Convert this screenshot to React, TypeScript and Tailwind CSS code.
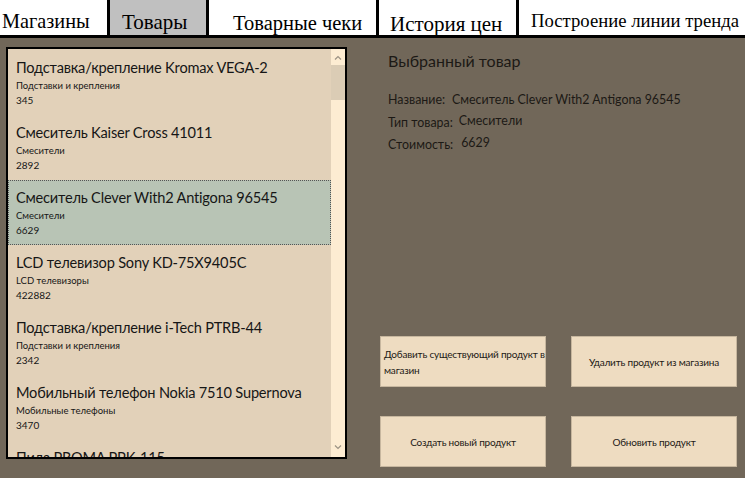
import React from 'react';

type Product = { name: string; type: string; price: string };

const products: Product[] = [
  { name: 'Подставка/крепление Kromax VEGA-2', type: 'Подставки и крепления', price: '345' },
  { name: 'Смеситель Kaiser Cross 41011', type: 'Смесители', price: '2892' },
  { name: 'Смеситель Clever With2 Antigona 96545', type: 'Смесители', price: '6629' },
  { name: 'LCD телевизор Sony KD-75X9405C', type: 'LCD телевизоры', price: '422882' },
  { name: 'Подставка/крепление i-Tech PTRB-44', type: 'Подставки и крепления', price: '2342' },
  { name: 'Мобильный телефон Nokia 7510 Supernova', type: 'Мобильные телефоны', price: '3470' },
  { name: 'Пила PROMA PPK-115', type: 'Пилы', price: '1290' },
];

const selectedIndex = 2;

const tabs = [
  { label: 'Магазины', box: 'w-[110px] pl-[2px] pt-[11px] text-[20.3px]', active: false },
  { label: 'Товары', box: 'w-[99px] pl-[12px] pt-[12px] text-[21px]', active: true },
  { label: 'Товарные чеки', box: 'w-[170px] pl-[24px] pt-[13px] text-[20.5px]', active: false },
  { label: 'История цен', box: 'w-[140px] pl-[11px] pt-[14px] text-[21px]', active: false },
  { label: 'Построение линии тренда', box: 'flex-1 pl-[12px] pt-[12px] text-[18.7px]', active: false },
];

const Chevron: React.FC<{ up?: boolean }> = ({ up }) => (
  <svg width="8" height="5" viewBox="0 0 8 5" className="text-[#9c9384]">
    <path
      d={up ? 'M1 4.5 L4 1.5 L7 4.5' : 'M1 0.5 L4 3.5 L7 0.5'}
      fill="none"
      stroke="currentColor"
      strokeWidth="1.2"
    />
  </svg>
);

const App: React.FC = () => {
  const selected = products[selectedIndex];

  return (
    <div className="w-[745px] h-[478px] overflow-hidden bg-[#716759] flex flex-col font-['Lato',sans-serif]">
      {/* tab strip */}
      <div className="flex h-[38px] bg-white border-b-[3px] border-black font-['Liberation_Serif',serif] text-black">
        {tabs.map((t, i) => (
          <div
            key={t.label}
            className={`${t.box} leading-none whitespace-nowrap ${i < tabs.length - 1 ? 'border-r-[3px] border-black' : ''} ${t.active ? 'bg-[#c0c0c0]' : 'bg-white'}`}
          >
            {t.label}
          </div>
        ))}
      </div>

      <div className="flex flex-1 pt-[9px] pl-[6px]">
        {/* product list */}
        <div className="w-[341px] h-[412px] border-2 border-black flex bg-[#e2d1b9]">
          <div className="flex-1 overflow-hidden pt-[1px]">
            {products.map((p, i) => (
              <div
                key={p.name}
                className={`h-[65px] border pl-[7px] pt-[7px] text-[#161616] ${
                  i === selectedIndex ? 'bg-[#b8c4b5] border-dotted border-[#555]' : 'border-transparent'
                }`}
              >
                <div className="text-[14.6px] tracking-[-0.2px] leading-[20px] whitespace-nowrap">{p.name}</div>
                <div className="text-[9.5px] leading-[14px] mt-[1px]">{p.type}</div>
                <div className="text-[10px] leading-[14px]">{p.price}</div>
              </div>
            ))}
          </div>
          <div className="w-[14px] flex flex-col bg-[#fdecd2]">
            <div className="h-[16px] flex items-center justify-center">
              <Chevron up />
            </div>
            <div className="h-[35px] bg-[#dbccb5]" />
            <div className="flex-1" />
            <div className="h-[16px] flex items-center justify-center mb-[2px]">
              <Chevron />
            </div>
          </div>
        </div>

        {/* selected product details */}
        <div className="flex-1 flex flex-col pl-[33px] text-[#1c1915]">
          <div className="pl-[8px] mt-[4px] text-[16px] leading-[20px]">Выбранный товар</div>
          <div className="pl-[8px] mt-[18px] text-[12.4px] leading-[22.5px]">
            <div className="flex gap-[7px]">
              <span>Название:</span>
              <span>{selected.name}</span>
            </div>
            <div className="flex gap-[6px]">
              <span>Тип товара:</span>
              <span className="-translate-y-[2px]">{selected.type}</span>
            </div>
            <div className="flex gap-[8px]">
              <span>Стоимость:</span>
              <span className="-translate-y-[2px]">{selected.price}</span>
            </div>
          </div>

          <div className="mt-auto mb-[11px] grid grid-cols-[166px_166px] gap-x-[25px] gap-y-[29px] text-[10px] tracking-[-0.2px] leading-[16px] text-[#1c1915]">
            <button className="h-[51px] bg-[#eedcc1] border border-[#c7b79f] text-left pl-[3px] pr-0">
              Добавить существующий продукт в магазин
            </button>
            <button className="h-[51px] bg-[#eedcc1] border border-[#c7b79f]">
              Удалить продукт из магазина
            </button>
            <button className="h-[51px] bg-[#eedcc1] border border-[#c7b79f]">
              Создать новый продукт
            </button>
            <button className="h-[51px] bg-[#eedcc1] border border-[#c7b79f]">
              Обновить продукт
            </button>
          </div>
        </div>
      </div>
    </div>
  );
};

export default App;
